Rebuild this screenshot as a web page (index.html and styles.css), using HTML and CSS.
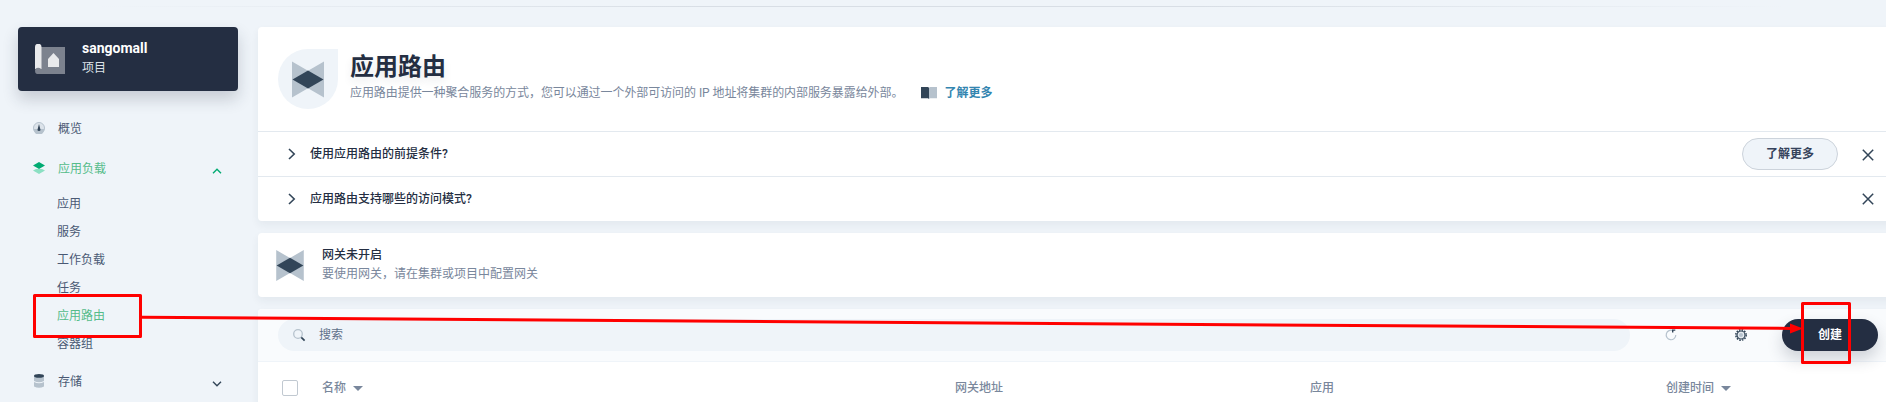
FILE: index.html
```html
<!DOCTYPE html>
<html lang="zh-CN">
<head>
<meta charset="utf-8">
<title>应用路由</title>
<link rel="stylesheet" href="styles.css">
</head>
<body>
<svg class="defs" width="0" height="0">
  <symbol id="route" viewBox="0 0 32 36"><path fill="#b6c2cd" d="M0 0l16 9.300L32 0v36l-16-9.300L0 36z"/><path fill="#324558" d="M.5 18L16 9l15.500 9L16 27z"/></symbol>
  <symbol id="close" viewBox="0 0 12 12"><path d="M.8.8l10.400 10.400M11.200.8L.8 11.200" fill="none" stroke="#324558" stroke-width="1.500"/></symbol>
  <symbol id="right" viewBox="0 0 8 12"><path d="M1 1l5.200 5L1 11" fill="none" stroke="#324558" stroke-width="1.600"/></symbol>
</svg>
<div class="topline"></div>
<div class="page">
  <aside class="sidebar">
    <div class="project">
      <svg width="30" height="30" viewBox="0 0 30 30"><path fill="#7c828e" d="M6 3h24v27H3v-6h3z"/><path fill="#e9eaec" d="M0 3a3.200 3.200 0 0 1 6.500 0v22H0z"/><path fill="#e9eaec" d="M13 15l5.500-6 5.500 6v8H13z"/><circle cx="3.200" cy="27" r="3.200" fill="#7c828e"/></svg>
      <div class="project-text"><strong>sangomall</strong><span>项目</span></div>
    </div>
    <nav class="nav">
      <div class="item">
        <svg width="12" height="12" viewBox="0 0 12 12"><circle cx="6" cy="6" r="5.500" fill="#dce3ea" stroke="#b6c2cd"/><path fill="#b6c2cd" d="M.5 7h11a5.500 5.500 0 0 1-11 0z"/><path fill="#324558" d="M6 2l1.300 5a1.400 1.400 0 1 1-2.600 0z"/></svg>
        <span>概览</span>
      </div>
      <div class="item active">
        <svg width="12" height="12" viewBox="0 0 12 12"><path fill="#8be0c3" d="M0 8.500l3-1.500h6l3 1.500L6 12z"/><path fill="#00aa72" d="M6 0l6 3.500L6 7 0 3.500z"/></svg>
        <span>应用负载</span>
        <svg class="arrow" width="10" height="6" viewBox="0 0 10 6"><path d="M1 5.300L5 1.300l4 4" fill="none" stroke="#00aa72" stroke-width="1.400"/></svg>
      </div>
      <div class="sub"><span>应用</span><span>服务</span><span>工作负载</span><span>任务</span><span class="active">应用路由</span><span>容器组</span></div>
      <div class="item">
        <svg width="12" height="14" viewBox="0 0 12 14"><path fill="#b6c2cd" d="M1 2h10v5q-5 2.500-10 0zM1 8q5 2.500 10 0v4.500q-5 2.500-10 0z"/><ellipse cx="6" cy="1.900" rx="5" ry="1.800" fill="#324558"/></svg>
        <span>存储</span>
        <svg class="arrow" width="10" height="6" viewBox="0 0 10 6"><path d="M1 .8l4 4 4-4" fill="none" stroke="#324558" stroke-width="1.400"/></svg>
      </div>
    </nav>
  </aside>
  <main class="main">
    <section class="card">
      <header class="banner">
        <div class="badge"><svg width="32" height="37"><use href="#route"/></svg></div>
        <div>
          <h1>应用路由</h1>
          <p class="desc"><span class="intro">应用路由提供一种聚合服务的方式，您可以通过一个外部可访问的 IP 地址将集群的内部服务暴露给外部。</span>
            <a class="more"><svg width="16" height="12" viewBox="0 0 16 12"><path fill="#324558" d="M0 0h7l1 .8V12l-1-.8H0z"/><path fill="#b6c2cd" d="M16 0H9l-1 .8V12l1-.8h7z"/></svg>了解更多</a></p>
        </div>
      </header>
      <div class="tip">
        <svg width="8" height="12"><use href="#right"/></svg><span>使用应用路由的前提条件?</span>
        <button class="btn">了解更多</button><svg class="close" width="12" height="12"><use href="#close"/></svg>
      </div>
      <div class="tip">
        <svg width="8" height="12"><use href="#right"/></svg><span>应用路由支持哪些的访问模式?</span>
        <svg class="close last" width="12" height="12"><use href="#close"/></svg>
      </div>
    </section>
    <section class="card gateway">
      <svg width="28" height="31"><use href="#route"/></svg>
      <div><strong>网关未开启</strong><p>要使用网关，请在集群或项目中配置网关</p></div>
    </section>
    <section class="card">
      <div class="toolbar">
        <div class="search"><svg width="13" height="13" viewBox="0 0 13 13"><circle cx="5" cy="5" r="4.300" fill="none" stroke="#b6c2cd" stroke-width="1.300"/><path d="M8.300 8.300l3.300 3.300" stroke="#324558" stroke-width="1.700"/></svg>搜索</div>
        <svg class="refresh" width="12" height="12" viewBox="0 0 12 12"><path d="M8 1.600A4.800 4.800 0 1 0 10.800 6" fill="none" stroke="#b6c2cd" stroke-width="1.200"/><path fill="#324558" d="M7 .5h3.300v1.200H8.400v1.800H7z"/></svg>
        <svg class="gear" width="12" height="12" viewBox="0 0 12 12"><circle cx="6" cy="6" r="5.200" fill="none" stroke="#324558" stroke-width="1.500" stroke-dasharray="1.550 1.172"/><circle cx="6" cy="6" r="4" fill="#e6ebf0" stroke="#324558" stroke-width="1.200"/><circle cx="6" cy="6" r="2" fill="#b6c2cd"/></svg>
        <button class="create">创建</button>
      </div>
      <div class="thead">
        <i class="check"></i>
        <span class="name">名称<i class="caret"></i></span>
        <span class="address">网关地址</span>
        <span class="app">应用</span>
        <span>创建时间<i class="caret"></i></span>
      </div>
    </section>
  </main>
</div>
<svg class="marks" width="1886" height="402">
  <g fill="none" stroke="#f00" stroke-width="3" stroke-linejoin="round">
    <rect x="34.500" y="295.500" width="106" height="41"/>
    <path d="M142 317.300L1792 328.400"/>
    <rect x="1802.500" y="303.500" width="47" height="59"/>
  </g>
  <path fill="#f00" d="M1790 323.500l13 5-13 5z"/>
</svg>
</body>
</html>
```
FILE: styles.css
```css
* { box-sizing: border-box; margin: 0; padding: 0; }
body {
  width: 1886px; height: 402px; overflow: hidden; position: relative;
  background: #eff4f9;
  font: 12px/20px Roboto, "Noto Sans CJK SC", sans-serif;
  color: #242e42;
}
svg { display: block; flex: none; }
.defs { position: absolute; }
.topline { height: 1px; margin-top: 6px; background: linear-gradient(90deg, #eff4f9 100px, #d8dee5 700px, #d8dee5 1200px, #eff4f9 1786px); }
.page { display: flex; gap: 20px; padding: 20px 0 0 18px; }
.sidebar { width: 220px; flex: none; }
.project {
  display: flex; align-items: center; gap: 17px; height: 64px; padding: 0 17px;
  border-radius: 4px; background: #242e42; color: #dfe3e9;
  box-shadow: 0 8px 16px rgba(36, 46, 66, .2);
}
.project-text { display: flex; flex-direction: column; padding-bottom: 2px; }
.project-text strong { color: #fff; font-size: 14px; line-height: 20px; }
.nav { padding-top: 17px; color: #4a5974; }
.item { display: flex; align-items: center; gap: 13px; height: 40px; padding: 0 16px 0 15px; }
.item span { flex: 1; padding-top: 2px; }
.item .arrow { margin-top: 5px; }
.sub { display: flex; flex-direction: column; padding: 2px 0 3px 39px; line-height: 28px; }
.active { color: #55bc8a; }
.main { display: flex; flex-direction: column; gap: 12px; width: 1640px; flex: none; }
.card { border-radius: 4px; background: #fff; box-shadow: 0 4px 8px rgba(36, 46, 66, .06); }
.banner { display: flex; gap: 12px; height: 104px; padding: 22px 20px 0; }
.badge { display: grid; place-items: center; width: 60px; height: 60px; border-radius: 50% 0 50% 50%; background: #eff4f9; }
h1 { font-size: 24px; line-height: 32px; padding-top: 2px; font-weight: 700; text-shadow: 0 4px 8px rgba(36, 46, 66, .1); }
.desc { display: flex; align-items: center; gap: 18px; color: #79879c; line-height: 20px; }
.intro { letter-spacing: -.07px; }
.more { display: flex; align-items: center; gap: 7px; color: #3385b0; font-weight: 700; }
.tip { display: flex; align-items: center; height: 45px; padding: 0 24px 0 30px; border-top: 1px solid #e3e9ef; font-weight: 500; }
.tip span { margin-left: 14px; flex: 1; }
.btn { width: 96px; height: 32px; border: 1px solid #ccd3db; border-radius: 16px; background: #eff4f9; color: #36435c; font: inherit; font-weight: 700; }
.close { margin: 2px 0 0 24px; }
.last { margin-top: 0; }
.gateway { display: flex; align-items: center; gap: 18px; height: 64px; padding: 0 18px; }
.gateway strong { display: block; line-height: 18px; font-weight: 500; }
.gateway p { color: #79879c; }
.toolbar { display: flex; align-items: center; height: 53px; padding-left: 20px; border-radius: 4px 4px 0 0; border-bottom: 1px solid #eff4f9; background: #f9fbfd; }
.search { display: flex; align-items: center; gap: 13px; width: 1352px; height: 32px; padding-left: 15px; border-radius: 16px; background: #eff4f9; color: #5f708a; }
.refresh { margin-left: 35px; }
.gear { margin: 0 35px 0 58px; }
.create { width: 96px; height: 32px; border: 0; border-radius: 16px; background: #242e42; color: #fff; font: inherit; font-weight: 700; box-shadow: 0 8px 16px rgba(36, 46, 66, .2); }
.thead { display: grid; grid-template-columns: 40px 633px 355px 356px auto; align-items: center; height: 52px; padding-left: 24px; color: #79879c; font-weight: 500; }
.check { width: 16px; height: 16px; border: 1px solid #c1c9d1; border-radius: 2px; background: #fff; }
.caret { display: inline-block; margin-left: 7px; vertical-align: 1px; border: 5px solid transparent; border-top-color: #79879c; border-bottom: 0; }
.marks { position: absolute; left: 0; top: 0; }
```
